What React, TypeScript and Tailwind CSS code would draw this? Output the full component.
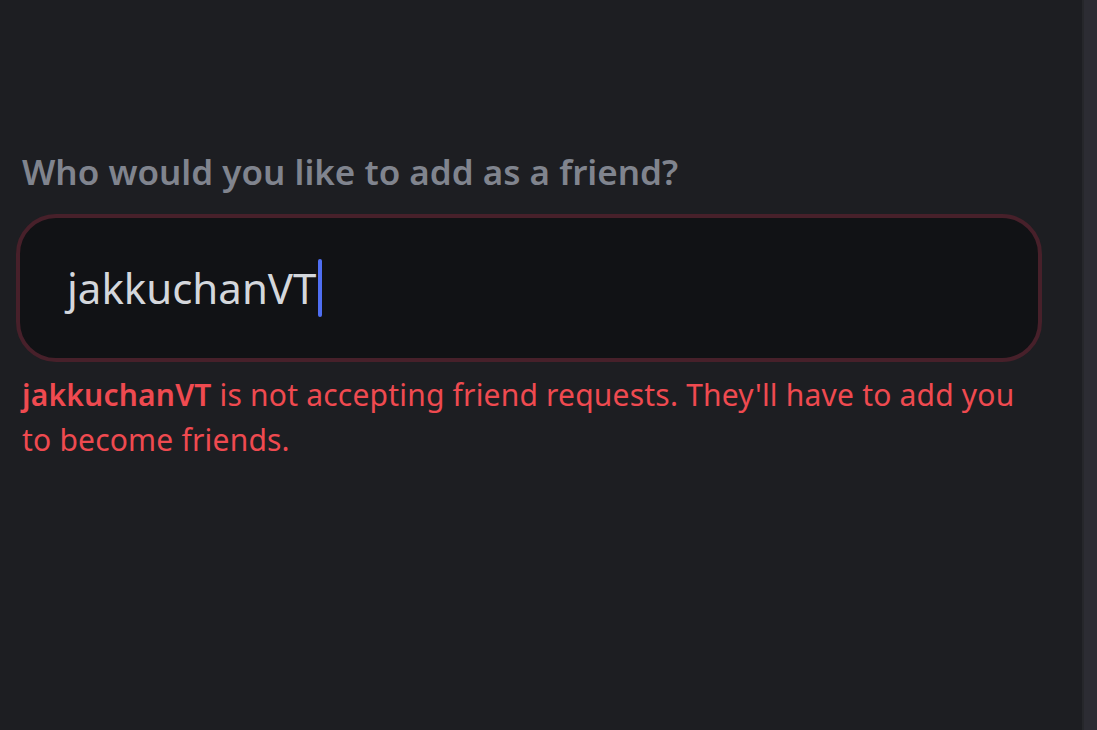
import React from 'react';

const App: React.FC = () => {
  return (
    <div className="flex h-[730px] w-[1097px] overflow-hidden bg-[#1d1e22] font-['Noto_Sans',sans-serif]">
      <main className="flex-1 pl-[16px] pr-[50px] pt-[148px]">
        <h2 className="pl-[6px] text-[35px] font-semibold leading-[48px] text-[#80848e]">
          Who would you like to add as a friend?
        </h2>
        <div className="mt-[18px] mr-[-10px] flex h-[148px] items-center rounded-[40px] border-[4px] border-[#47202a] bg-[#111215] pl-[47px]">
          <span className="text-[42px] font-normal leading-none text-[#d4d7dc]">jakkuchanVT</span>
          <span className="ml-[2px] h-[58px] w-[4px] rounded-full bg-[#4f6ef2]" />
        </div>
        <p className="mt-[10px] pl-[6px] text-[30px] leading-[45px] tracking-[0.2px] text-[#ef4a50]">
          <span className="font-semibold">jakkuchanVT</span> is not accepting friend requests. They'll have to add you
          to become friends.
        </p>
      </main>
      <aside className="w-[15px] border-l-[2px] border-[#26272b] bg-[#2c2c33]" />
    </div>
  );
};

export default App;
